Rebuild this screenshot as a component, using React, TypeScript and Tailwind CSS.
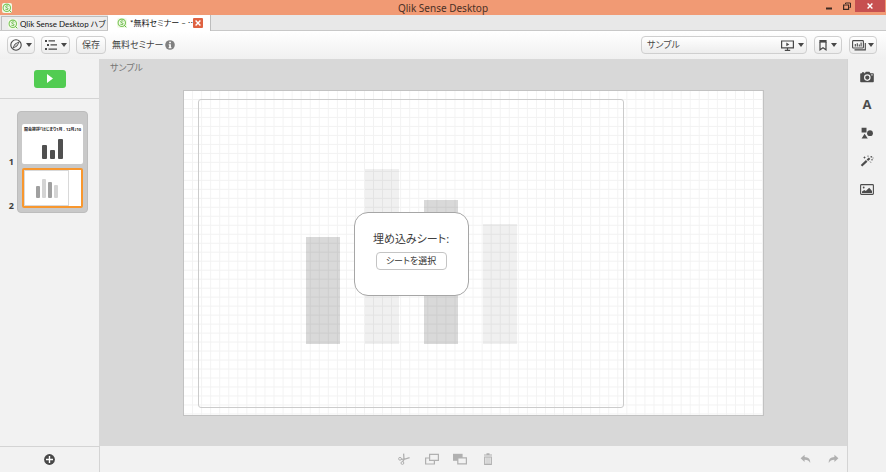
import type { ReactNode } from "react";
import clsx from "clsx";

const toolButton =
  "flex h-[18px] items-center justify-center gap-1 rounded-[4px] border border-[#cfcfcf] bg-gradient-to-b from-white to-[#ededed] text-[#484848]";

function Caret() {
  return (
    <svg viewBox="0 0 6 4" className="h-1 w-[6px] shrink-0" fill="currentColor">
      <path d="M0 0h6L3 4z" />
    </svg>
  );
}

function QlikLogo() {
  return (
    <svg viewBox="0 0 10 10" className="size-[10px] shrink-0" fill="none">
      <rect width="10" height="10" rx="2" fill="#f3fbe9" />
      <circle cx="4.8" cy="4.8" r="3.7" stroke="#7cc65a" strokeWidth="1.1" />
      <path d="M6.3 3.3C5.4 2.6 3.6 2.7 3.6 3.8c0 1.2 2.5.8 2.5 2 0 1-1.7 1.1-2.7.4M7.3 7.3l2 2" stroke="#64b845" strokeWidth="1" />
    </svg>
  );
}

function CompassIcon() {
  return (
    <svg viewBox="0 0 12 12" className="size-3 shrink-0" fill="none" stroke="currentColor">
      <circle cx="6" cy="6" r="5.2" strokeWidth="1.1" />
      <path d="M9 3 7 7 3 9l2-4z" strokeWidth="0.9" />
      <circle cx="6" cy="6" r="0.6" fill="currentColor" stroke="none" />
    </svg>
  );
}

function ListIcon() {
  return (
    <svg viewBox="0 0 12 10" className="h-[10px] w-3 shrink-0" fill="currentColor">
      <path d="M0 0h2v2H0zM3.500 .3H10v1.300H3.500zM2 4h2v2H2zM5.500 4.300H12v1.300H5.500zM0 8h2v2H0zM3.500 8.400H12v1.300H3.500z" />
    </svg>
  );
}

function PresentIcon() {
  return (
    <svg viewBox="0 0 13 11" className="h-[11px] w-[13px] shrink-0" fill="none" stroke="currentColor" strokeWidth="1.2">
      <path d="M.6 1h11.800v6.800H.6zM6.500 8v2.200M3.800 10.300h5.400" />
      <path d="M5.300 2.600v3.600l3-1.800z" fill="currentColor" stroke="none" />
    </svg>
  );
}

function BookmarkIcon() {
  return (
    <svg viewBox="0 0 8 11" className="h-[11px] w-2 shrink-0" fill="none" stroke="currentColor" strokeWidth="1.2">
      <path d="M1 2v7.800l3-2 3 2V2" />
      <path d="M.4 0h7.200v2.600H.4z" fill="currentColor" stroke="none" />
    </svg>
  );
}

function SheetsIcon() {
  return (
    <svg viewBox="0 0 14 11" className="h-[11px] w-[14px] shrink-0" fill="none" stroke="currentColor" strokeWidth="1.1">
      <rect x=".6" y=".6" width="10.8" height="7.4" rx=".8" />
      <path d="M2.500 9.900h10.800V3" />
      <path d="M3.300 6.500V4M5.300 6.500V3.200M7.300 6.500V4.500M9.100 6.500v-4" />
    </svg>
  );
}

function InfoIcon() {
  return (
    <svg viewBox="0 0 10 10" className="size-[10px] shrink-0">
      <circle cx="5" cy="5" r="4.8" fill="#808080" />
      <path d="M4.200 1.800h1.700v1.500H4.200zM3.700 4.200h2.200v3h.6v1H3.600v-1h.6v-2h-.5z" fill="#fff" />
    </svg>
  );
}

function CameraIcon() {
  return (
    <svg viewBox="0 0 14 12" className="h-3 w-[14px]" fill="currentColor">
      <path d="M1 2.200h1V1.200h2.200v1h.6L5.800.8h3.600l1 1.400H13a.8.8 0 0 1 .8.800v7.400a.8.800 0 0 1-.8.800H1a.8.800 0 0 1-.8-.8V3a.8.800 0 0 1 .8-.8z" />
      <circle cx="7.3" cy="6.6" r="2.7" fill="none" stroke="#f1f1f1" strokeWidth="1.2" />
      <path d="M11.300 3.300h1.300v1.200h-1.300z" fill="#f1f1f1" />
    </svg>
  );
}

function ShapesIcon() {
  return (
    <svg viewBox="0 0 12 12" className="size-3" fill="currentColor">
      <path d="M.6.8h4.900v4.600H.6zM3.600 6.800l3.200 4.600H.6z" />
      <circle cx="9" cy="6.2" r="2.9" />
    </svg>
  );
}

function WandIcon() {
  return (
    <svg viewBox="0 0 14 12" className="h-3 w-[14px]" fill="none" stroke="currentColor">
      <path d="M1.500 10.800 6.700 5.900" strokeWidth="2.2" />
      <path d="m7.400 5.200 2.200-2" strokeWidth="2.2" />
      <path d="M4.500 1.500v2M3.500 2.500h2M8 .5v1.400M11.300 1v1.600M10.500 1.800h1.700M11 4.800h2M10 6.500l1 1.200M12.500 3h1" strokeWidth=".8" />
    </svg>
  );
}

function PictureIcon() {
  return (
    <svg viewBox="0 0 14 11" className="h-[11px] w-[14px]" fill="currentColor">
      <rect x=".6" y=".6" width="12.8" height="9.8" rx=".8" fill="none" stroke="currentColor" strokeWidth="1.1" />
      <path d="M2 9V7.600L4.300 6l1.500 1 3.400-3.200L12 7v2z" />
      <circle cx="3.7" cy="3.5" r=".9" />
    </svg>
  );
}

function ScissorsIcon() {
  return (
    <svg viewBox="0 0 12 12" className="size-3" fill="none" stroke="currentColor">
      <path d="M5.600.6 6 6.400 4.600 8.800M11.600 4.600 6 6.400l-3-.2" strokeWidth="1.3" />
      <circle cx="2" cy="5.8" r="1.4" strokeWidth="1" />
      <circle cx="4.4" cy="10" r="1.4" strokeWidth="1" />
    </svg>
  );
}

function CopyIcon() {
  return (
    <svg viewBox="0 0 14 12" className="h-3 w-[14px]" fill="none" stroke="currentColor" strokeWidth="1.2">
      <path d="M4.600 1.300h8.800v6H4.600z" />
      <path d="M4 5H.6v6h8.800V8" />
    </svg>
  );
}

function PasteIcon() {
  return (
    <svg viewBox="0 0 14 12" className="h-3 w-[14px]">
      <path d="M0 .8h9.600v7H0z" fill="currentColor" />
      <path d="M4.800 4.900h8.600v6H4.800z" fill="#f2f2f2" stroke="currentColor" strokeWidth="1.2" />
    </svg>
  );
}

function TrashIcon() {
  return (
    <svg viewBox="0 0 10 12" className="h-3 w-[10px]" fill="none" stroke="currentColor">
      <path d="M1 2h8M3.500 .9h3" strokeWidth="1.2" />
      <path d="M1.700 4v7.300h6.600V4z" strokeWidth="1.2" />
      <path d="M4 4v7M6 4v7" strokeWidth=".8" />
    </svg>
  );
}

function UndoIcon({ flip }: { flip?: boolean }) {
  return (
    <svg viewBox="0 0 11 10" className={clsx("h-[10px] w-[11px]", flip && "-scale-x-100")} fill="currentColor">
      <path d="M4.600.8v2.100C8.500 3 10.500 5 10.200 9 9 6.600 7.500 5.800 4.600 5.800v2.100L.6 4.300z" />
    </svg>
  );
}

function IconButton({ label, children }: { label: string; children: ReactNode }) {
  return (
    <button type="button" aria-label={label} className="flex h-7 w-7 items-center justify-center">
      {children}
    </button>
  );
}

function TitleBar() {
  return (
    <header className="relative flex h-[15px] items-center justify-between bg-[#f19a74]">
      <span className="pl-[2px]">
        <QlikLogo />
      </span>
      <h1 className="absolute inset-x-0 text-center font-['Noto_Sans','Open_Sans',sans-serif] text-[10px] leading-4 text-[#4a3026]">
        Qlik Sense Desktop
      </h1>
      <div className="relative flex h-full items-start text-[#3d2a22]">
        <button type="button" aria-label="最小化" className="flex h-3 w-[18px] items-center justify-center">
          <svg viewBox="0 0 6 8" className="h-2 w-[6px]">
            <path d="M0 5.500h6v2H0z" fill="currentColor" />
          </svg>
        </button>
        <button type="button" aria-label="元に戻す" className="flex h-3 w-[17px] items-center justify-center">
          <svg viewBox="0 0 8 8" className="size-2" fill="none" stroke="currentColor">
            <path d="M2.500 2V1h5v4.500h-1" />
            <path d="M.6 3h5v4.400h-5z" strokeWidth="1.2" />
          </svg>
        </button>
        <button type="button" aria-label="閉じる" className="mr-px flex h-3 w-[30px] items-center justify-center bg-[#c75050] text-white">
          <svg viewBox="0 0 6 6" className="size-[6px]" stroke="currentColor" strokeWidth="1.4">
            <path d="m.6.600 4.800 4.800M5.400.6.600 5.400" />
          </svg>
        </button>
      </div>
    </header>
  );
}

function TabStrip() {
  return (
    <nav className="flex h-4 items-end border-b border-[#c8c8c8] bg-[#e8e8e8] pl-px font-['Lato','Noto_Sans_CJK_JP',sans-serif] text-[8px] leading-3 text-[#111]">
      <a href="#hub" className="flex h-[14px] w-[107px] items-center gap-[2px] border border-b-0 border-[#bdbdbd] bg-[#ececec] pl-[6px] whitespace-nowrap">
        <QlikLogo />
        <span>Qlik Sense Desktop ハブ</span>
      </a>
      <div className="-mb-px flex h-4 w-[103px] items-center gap-[3px] border-r border-[#bdbdbd] bg-white pl-[9px] whitespace-nowrap">
        <QlikLogo />
        <a href="#app" className="w-[60px]">*無料セミナー – ⋯</a>
        <button type="button" aria-label="タブを閉じる" className="flex size-[10px] items-center justify-center rounded-[1px] bg-[#df6242]">
          <svg viewBox="0 0 6 6" className="size-[6px]" stroke="#fff" strokeWidth="1.4">
            <path d="m.6.600 4.800 4.800M5.400.6.600 5.400" />
          </svg>
        </button>
      </div>
    </nav>
  );
}

function Toolbar() {
  return (
    <div className="flex h-7 items-center justify-between bg-gradient-to-b from-white to-[#f0f0f0] pr-[9px] pl-[7px] text-[#404040]">
      <div className="flex items-center gap-[6px]">
        <button type="button" aria-label="ナビゲーション" className={clsx(toolButton, "w-7")}>
          <CompassIcon />
          <Caret />
        </button>
        <button type="button" aria-label="メニュー" className={clsx(toolButton, "w-[29px]")}>
          <ListIcon />
          <Caret />
        </button>
        <button type="button" className={clsx(toolButton, "w-[30px] text-[9px]")}>
          保存
        </button>
        <div className="flex items-center gap-[2px]">
          <span className="text-[9px]">無料セミナー</span>
          <button type="button" aria-label="情報">
            <InfoIcon />
          </button>
        </div>
      </div>
      <div className="flex items-center gap-[7px]">
        <button type="button" className={clsx(toolButton, "w-[166px] pr-[2px] pl-[5px]")}>
          <span className="flex-1 text-left text-[9px]">サンプル</span>
          <PresentIcon />
          <Caret />
        </button>
        <button type="button" aria-label="ブックマーク" className={clsx(toolButton, "w-7")}>
          <BookmarkIcon />
          <Caret />
        </button>
        <button type="button" aria-label="シート" className={clsx(toolButton, "w-7 gap-[2px]")}>
          <SheetsIcon />
          <Caret />
        </button>
      </div>
    </div>
  );
}

function StoryPanel() {
  return (
    <aside className="flex w-[99px] shrink-0 flex-col bg-[#f2f2f2]">
      <div className="flex h-10 items-center justify-center border-b border-[#d4d4d4]">
        <button type="button" aria-label="ストーリーを再生" className="flex h-[18px] w-8 items-center justify-center rounded-[3px] bg-[#52cc52]">
          <svg viewBox="0 0 6 9" className="h-[9px] w-[6px]">
            <path d="M0 0v9l6-4.500z" fill="#fff" />
          </svg>
        </button>
      </div>

      <div className="flex flex-1 items-start pt-3">
        <ol className="flex w-[17px] flex-col gap-1 pt-4 pr-[3px] text-[9px] leading-[10px] font-bold text-[#404040]">
          <li className="flex h-10 items-end justify-end">1</li>
          <li className="flex h-10 items-end justify-end">2</li>
        </ol>
        <div className="flex w-[71px] flex-col gap-1 rounded-[4px] border border-[#bdbdbd] bg-[#c9c9c9] px-1 pt-3 pb-1">
          <button type="button" aria-label="スライド 1" className="flex h-10 flex-col items-center justify-between rounded-[2px] bg-white pt-[3px] pb-[5px]">
            <span className="text-[4px] leading-[6px] font-bold whitespace-nowrap text-[#222]">開会挨拶「はじまり1月 - 12月」10</span>
            <span className="flex items-end gap-[3px]">
              <span className="h-[14px] w-[5px] rounded-[1px] bg-[#505050]" />
              <span className="h-[9px] w-[5px] rounded-[1px] bg-[#505050]" />
              <span className="h-5 w-[5px] rounded-[1px] bg-[#505050]" />
            </span>
          </button>
          <button type="button" aria-label="スライド 2" className="flex h-10 rounded-[2px] border-2 border-[#f8972e] bg-white">
            <span className="flex h-full w-[45px] items-end justify-center gap-[2px] border border-[#d9d9d9] pb-[7px]">
              <span className="h-3 w-1 rounded-[1px] bg-[#a0a0a0]" />
              <span className="h-[19px] w-1 rounded-[1px] bg-[#d4d4d4]" />
              <span className="h-4 w-1 rounded-[1px] bg-[#a0a0a0]" />
              <span className="h-[13px] w-1 rounded-[1px] bg-[#d4d4d4]" />
            </span>
          </button>
        </div>
      </div>

      <div className="flex h-[26px] items-center justify-center border-t border-[#d4d4d4]">
        <button type="button" aria-label="スライドを追加">
          <svg viewBox="0 0 11 11" className="size-[11px]">
            <circle cx="5.5" cy="5.5" r="5.4" fill="#484848" />
            <path d="M5.500 2v7M2 5.500h7" stroke="#fff" strokeWidth="1.4" />
          </svg>
        </button>
      </div>
    </aside>
  );
}

function EmbeddedSheet() {
  return (
    <section className="grid flex-1 rounded-[3px] border border-[#cbcbcb]">
      <div className="col-start-1 row-start-1 flex items-end justify-center gap-[25px] pb-[63px]">
        <div className="h-[107px] w-[34px] bg-black/15" />
        <div className="h-[175px] w-[34px] bg-black/6" />
        <div className="h-36 w-[34px] bg-black/15" />
        <div className="h-[120px] w-[34px] bg-black/6" />
      </div>
      <div className="z-10 col-start-1 row-start-1 flex h-[84px] w-[115px] flex-col items-center gap-1 place-self-center rounded-[14px] border border-[#a6a6a6] bg-white pt-[17px] text-[#404040]">
        <p className="text-[11px] leading-[18px]">埋め込みシート:</p>
        <button type="button" className="h-[18px] w-[71px] rounded-[4px] border border-[#c4c4c4] bg-white text-[9px] leading-4 text-[#333]">
          シートを選択
        </button>
      </div>
    </section>
  );
}

function Canvas() {
  return (
    <main className="flex min-w-0 flex-1 flex-col">
      <div className="flex flex-1 flex-col bg-[#d8d8d8] pb-[30px]">
        <h2 className="h-[31px] pt-px pl-[11px] text-[9px] leading-4 text-[#757575]">サンプル</h2>
        <div className="mr-[83px] ml-[84px] flex flex-1 border border-[#c2c2c2] bg-white bg-[linear-gradient(to_left,#f2f2f2_1px,transparent_1px),linear-gradient(to_top,#f2f2f2_1px,transparent_1px)] bg-[size:calc(100%/64)_calc(100%/36)] pt-2 pr-[139px] pb-[7px] pl-[14px]">
          <EmbeddedSheet />
        </div>
      </div>
      <footer className="flex h-[26px] items-center border-l border-[#d4d4d4] bg-[#f2f2f2] text-[#b0b0b0]">
        <div className="flex flex-1 justify-center">
          <IconButton label="切り取り"><ScissorsIcon /></IconButton>
          <IconButton label="コピー"><CopyIcon /></IconButton>
          <IconButton label="貼り付け"><PasteIcon /></IconButton>
          <IconButton label="削除"><TrashIcon /></IconButton>
        </div>
        <div className="flex">
          <IconButton label="元に戻す"><UndoIcon /></IconButton>
          <IconButton label="やり直し"><UndoIcon flip /></IconButton>
        </div>
      </footer>
    </main>
  );
}

function ObjectLibrary() {
  return (
    <aside className="flex w-[39px] shrink-0 flex-col items-center border-l border-[#d4d4d4] bg-[#f1f1f1] pt-1 text-[#4c4c4c]">
      <IconButton label="スナップショット"><CameraIcon /></IconButton>
      <button type="button" aria-label="テキスト" className="h-7 w-7 font-['Open_Sans',sans-serif] text-[13px] font-bold">
        A
      </button>
      <IconButton label="図形"><ShapesIcon /></IconButton>
      <IconButton label="効果"><WandIcon /></IconButton>
      <IconButton label="メディア"><PictureIcon /></IconButton>
    </aside>
  );
}

export default function App() {
  return (
    <div className="flex h-screen flex-col bg-[#f2f2f2] font-['Noto_Sans','Noto_Sans_CJK_JP',sans-serif] [font-feature-settings:'palt']">
      <TitleBar />
      <TabStrip />
      <Toolbar />
      <div className="flex min-h-0 flex-1">
        <StoryPanel />
        <Canvas />
        <ObjectLibrary />
      </div>
    </div>
  );
}
